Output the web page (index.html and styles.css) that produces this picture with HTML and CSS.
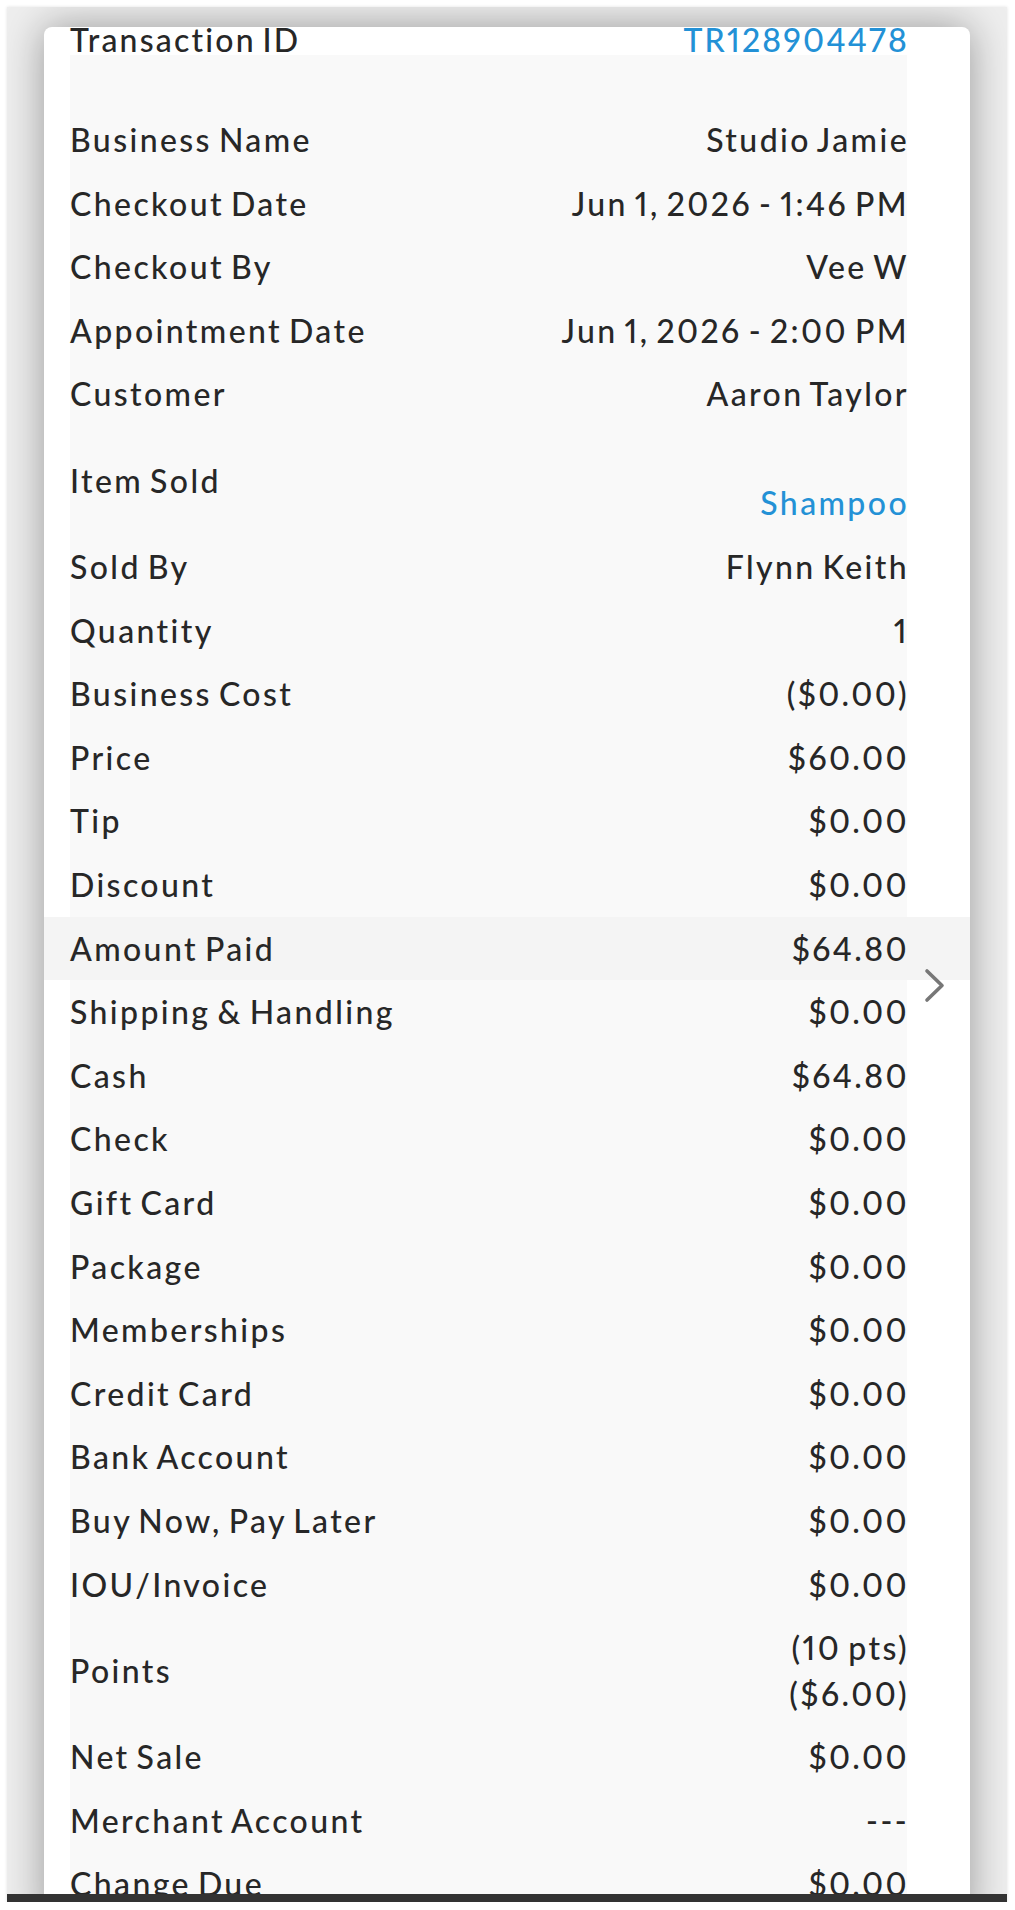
FILE: index.html
```html
<!DOCTYPE html>
<html lang="en">
<head>
    <meta charset="UTF-8">
    <meta name="viewport" content="width=device-width, initial-scale=1.0">
    <title>Transaction TR128904478</title>
    <link rel="stylesheet" href="styles.css">
</head>
<body>
    <div class="frame">
        <div class="card">
            <div class="txn-head">
                <span>Transaction ID</span>
                <span class="link">TR128904478</span>
            </div>

            <div class="details">
                <div class="row"><span class="label">Business Name</span><span class="value">Studio Jamie</span></div>
                <div class="row"><span class="label">Checkout Date</span><span class="value">Jun 1, 2026 - 1:46 PM</span></div>
                <div class="row"><span class="label">Checkout By</span><span class="value">Vee W</span></div>
                <div class="row"><span class="label">Appointment Date</span><span class="value">Jun 1, 2026 - 2:00 PM</span></div>
                <div class="row"><span class="label">Customer</span><span class="value">Aaron Taylor</span></div>
                <div class="row">
                    <span class="label">Item Sold</span>
                    <span class="value multi"><span class="line">&nbsp;</span><span class="line link">Shampoo</span></span>
                </div>
                <div class="row"><span class="label">Sold By</span><span class="value">Flynn Keith</span></div>
                <div class="row"><span class="label">Quantity</span><span class="value">1</span></div>
                <div class="row"><span class="label">Business Cost</span><span class="value">($0.00)</span></div>
                <div class="row"><span class="label">Price</span><span class="value">$60.00</span></div>
                <div class="row"><span class="label">Tip</span><span class="value">$0.00</span></div>
                <div class="row"><span class="label">Discount</span><span class="value">$0.00</span></div>
                <div class="row active"><span class="label">Amount Paid</span><span class="value">$64.80</span></div>
                <div class="row"><span class="label">Shipping &amp; Handling</span><span class="value">$0.00</span></div>
                <div class="row"><span class="label">Cash</span><span class="value">$64.80</span></div>
                <div class="row"><span class="label">Check</span><span class="value">$0.00</span></div>
                <div class="row"><span class="label">Gift Card</span><span class="value">$0.00</span></div>
                <div class="row"><span class="label">Package</span><span class="value">$0.00</span></div>
                <div class="row"><span class="label">Memberships</span><span class="value">$0.00</span></div>
                <div class="row"><span class="label">Credit Card</span><span class="value">$0.00</span></div>
                <div class="row"><span class="label">Bank Account</span><span class="value">$0.00</span></div>
                <div class="row"><span class="label">Buy Now, Pay Later</span><span class="value">$0.00</span></div>
                <div class="row"><span class="label">IOU/Invoice</span><span class="value">$0.00</span></div>
                <div class="row">
                    <span class="label">Points</span>
                    <span class="value multi"><span class="line">(10 pts)</span><span class="line">($6.00)</span></span>
                </div>
                <div class="row"><span class="label">Net Sale</span><span class="value">$0.00</span></div>
                <div class="row"><span class="label">Merchant Account</span><span class="value">---</span></div>
                <div class="row"><span class="label">Change Due</span><span class="value">$0.00</span></div>
            </div>

            <!-- next arrow floats over the list -->
            <svg class="next" width="22" height="36" viewBox="0 0 22 36">
                <polyline points="3,3 18,17.5 3,32" fill="none" stroke="#777" stroke-width="3.6" stroke-linecap="round" stroke-linejoin="round"/>
            </svg>
        </div>
    </div>
</body>
</html>
```

FILE: styles.css
```css
body {
    margin: 0;
    background: #fff;
    font-family: "Lato", "Open Sans", sans-serif;
    font-variant-numeric: proportional-nums;
    color: #272727;
}
.frame {
    margin: 7px 8px 0 7px;
    width: 926px;
    height: 1867px;
    padding: 20px 37px 0 37px;
    background: #eeeeee;
    border-bottom: 8px solid #333;
    box-shadow: 0 0 3px rgba(0,0,0,0.12);
    overflow: hidden;
}
.card {
    position: relative;
    background: #fff;
    border-radius: 8px 8px 0 0;
    box-shadow: 0 0 40px rgba(0,0,0,0.36);
    min-height: 1900px;
}
.txn-head {
    display: flex;
    justify-content: space-between;
    height: 28px;
    line-height: 25px;
    margin: 0 61px 0 26px;
    font-size: 32px;
    font-weight: 500;
    letter-spacing: 2.2px;
    word-spacing: -3.5px;
}
.link {
    color: #2391d6;
}
.details {
    margin: 0 63px 0 26px;
    padding-top: 53px;
    background: #f9f9f9;
}
.row {
    display: flex;
    justify-content: space-between;
    align-items: center;
    padding: 9.1px 0;
    font-size: 32px;
    font-weight: 500;
    line-height: 45.4px;
    letter-spacing: 2.4px;
    word-spacing: -3.5px;
    margin-right: -2px;
}
.row.active {
    background: #f4f4f4;
    margin: 0 -63px 0 -26px;
    padding-left: 26px;
    padding-right: 61px;
}
.value {
    text-align: right;
}
.value.multi {
    display: flex;
    flex-direction: column;
    align-items: flex-end;
}
.next {
    position: absolute;
    left: 880px;
    top: 941px;
}
```
